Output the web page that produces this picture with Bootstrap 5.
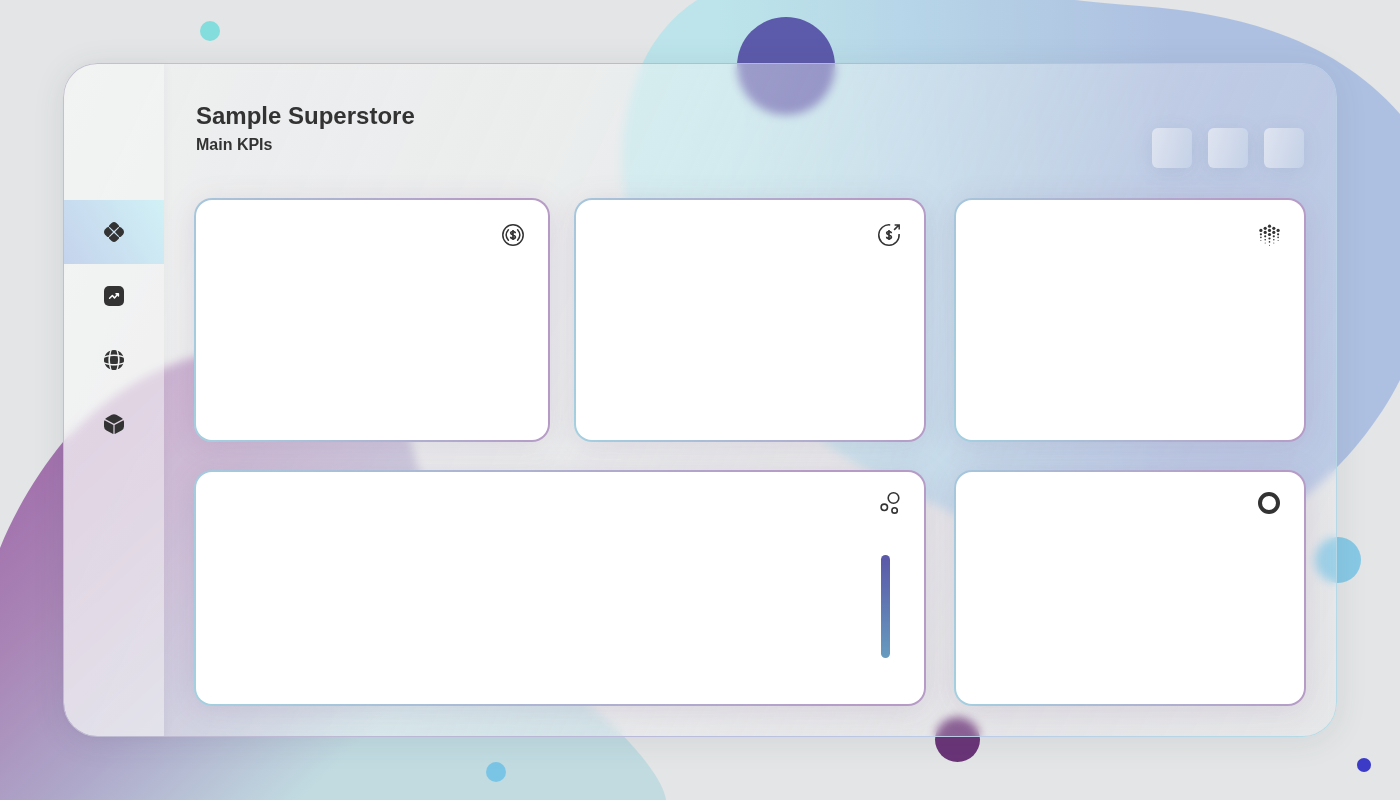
<!DOCTYPE html>
<html lang="en">
<head>
<meta charset="utf-8">
<meta name="viewport" content="width=device-width, initial-scale=1">
<title>Sample Superstore</title>
<link href="https://cdn.jsdelivr.net/npm/bootstrap@5.3.0/dist/css/bootstrap.min.css" rel="stylesheet">
<style>
  body { font-family: "Liberation Sans", Arial, sans-serif; background: #e3e5e6; color: #333; }
  .backdrop-art { position: fixed; inset: 0; width: 100%; height: 100%; z-index: -1; }
  .page-shell { padding: 63px; min-height: 100vh; }
  .glass {
    position: relative; border: 1px solid transparent; border-radius: 34px;
    background: linear-gradient(115deg, rgba(248,248,248,.5) 0%, rgba(244,246,246,.44) 40%, rgba(236,232,238,.26) 75%, rgba(240,240,244,.2) 100%);
    background-clip: padding-box;
    -webkit-backdrop-filter: blur(5px); backdrop-filter: blur(5px);
    box-shadow: 0 4px 32px rgba(60,70,90,.1);
  }
  .glass::before {
    content: ""; position: absolute; inset: -1px; border-radius: 34px; padding: 1px; pointer-events: none;
    background: linear-gradient(115deg, #c4c0d0 0%, #b9b6d6 50%, #bccbe6 75%, #b4dce6 100%);
    -webkit-mask: linear-gradient(#000 0 0) content-box, linear-gradient(#000 0 0);
    -webkit-mask-composite: xor; mask-composite: exclude;
  }
  .side-rail {
    width: 100px; padding-top: 136px; border-radius: 33px 0 0 33px;
    background: rgba(245,245,246,.5); box-shadow: 2px 0 8px rgba(60,50,80,.04);
  }
  .side-rail .nav-link { height: 64px; padding: 0; color: #333; }
  .side-rail .nav-link.active { background: linear-gradient(60deg, #c4d3ec, #d1f1f6); }
  .top-bar { padding: 36px 32px 0; min-height: 104px; }
  .top-bar h1 { font-size: 24px; line-height: 32px; }
  .top-bar h2 { font-size: 16px; line-height: 26px; }
  .tool-btn {
    width: 40px; height: 40px; padding: 0; border: 0; border-radius: 6px;
    background: linear-gradient(105deg, #dfe4f0, #c4d1e7); box-shadow: 0 4px 20px rgba(80,100,140,.12);
  }
  .board {
    display: grid; padding: 30px; gap: 28px;
    grid-template-columns: minmax(0, 732fr) minmax(0, 352fr);
    grid-template-rows: minmax(0, 244fr) minmax(0, 236fr);
  }
  .board-top { gap: 24px; }
  .wide-first { flex: 356 1 0; }
  .wide-next { flex: 352 1 0; }
  .kpi {
    border: 2px solid transparent; border-radius: 18px; padding: 23px;
    background: linear-gradient(#fff, #fff) padding-box, linear-gradient(75deg, #a3d0e0, #b69bc6 85%) border-box;
    box-shadow: 0 4px 30px rgba(110,60,120,.13);
  }
  .kpi.row-bottom { padding-top: 19px; }
  .scale-bar { width: 9px; height: 103px; margin: 40px 11px 0 0; border-radius: 5px; background: linear-gradient(#5a57a8, #679bbf); }
</style>
</head>
<body>
<svg class="backdrop-art" viewBox="0 0 1400 800" preserveAspectRatio="xMidYMid slice" aria-hidden="true">
  <defs>
    <linearGradient id="sky" gradientUnits="userSpaceOnUse" x1="720" y1="60" x2="1170" y2="40">
      <stop offset="0" stop-color="#bce4ea"/><stop offset=".28" stop-color="#b9dbe8"/>
      <stop offset=".4" stop-color="#b7d6e9"/><stop offset=".6" stop-color="#b4cfe5"/>
      <stop offset="1" stop-color="#aec0e1"/>
    </linearGradient>
    <linearGradient id="plum" gradientUnits="userSpaceOnUse" x1="15" y1="500" x2="300" y2="800">
      <stop offset="0" stop-color="#a373ae"/><stop offset=".25" stop-color="#a985b6"/>
      <stop offset=".6" stop-color="#aea8ca"/><stop offset="1" stop-color="#c1dbe1"/>
    </linearGradient>
  </defs>
  <path fill="url(#sky)" d="M697 0C650 30 620 90 622 170C628 300 720 370 822 440C860 472 925 498 955 515C1080 570 1220 560 1306 495C1345 465 1380 420 1400 380C1450 300 1450 180 1400 114C1340 45 1250 14 1140 6Q1100 3 1075 0Z"/>
  <path fill="url(#plum)" d="M0 548C15 510 40 470 63 442C95 408 130 382 164 368C250 330 380 340 411 442C436 550 520 640 590 706C630 737 664 780 666 800H0Z"/>
  <circle cx="210" cy="31" r="10" fill="#83dddd"/>
  <circle cx="786" cy="66" r="49" fill="#5c5aaa"/>
  <circle cx="1338" cy="560" r="23" fill="#88c9e5"/>
  <circle cx="957.500" cy="739.500" r="22.500" fill="#6a3477"/>
  <circle cx="496" cy="772" r="10" fill="#7ac5e6"/>
  <circle cx="1364" cy="765" r="7" fill="#3b3bc8"/>
</svg>

<div class="page-shell d-flex">
  <div class="glass d-flex flex-grow-1">
    <nav class="side-rail nav flex-column flex-shrink-0" aria-label="Sections">
      <a class="nav-link active d-flex align-items-center justify-content-center" href="#overview" aria-label="Overview" aria-current="page">
        <svg width="20" height="20" viewBox="0 0 20 20" fill="currentColor" aria-hidden="true">
          <path id="petal" d="M10 9.200 6.200 6.300Q4.100 4.500 5.500 2.900L7.600.900Q10-.900 12.400.900L14.500 2.900Q15.900 4.500 13.800 6.300Z"/>
          <use href="#petal" transform="rotate(90 10 10)"/><use href="#petal" transform="rotate(180 10 10)"/><use href="#petal" transform="rotate(270 10 10)"/>
          <path d="M5.300 5.300 14.700 14.700M14.700 5.300 5.300 14.700" stroke="#cbe2f0" stroke-width="1.100"/>
        </svg>
      </a>
      <a class="nav-link d-flex align-items-center justify-content-center" href="#trends" aria-label="Trends">
        <svg width="20" height="20" viewBox="0 0 20 20" aria-hidden="true">
          <rect width="20" height="20" rx="5" fill="currentColor"/>
          <path d="M5.600 12.300 8.400 9.500 10.500 11.900 13.500 8.600M12 7.700H14.400V10" fill="none" stroke="#fff" stroke-width="1.500" stroke-linecap="round" stroke-linejoin="round"/>
        </svg>
      </a>
      <a class="nav-link d-flex align-items-center justify-content-center" href="#regions" aria-label="Regions">
        <svg width="20" height="20" viewBox="0 0 20 20" fill="currentColor" aria-hidden="true">
          <path d="M6.300 6.300Q10 5.600 13.700 6.300Q14.400 10 13.700 13.700Q10 14.400 6.300 13.700Q5.600 10 6.300 6.300Z"/>
          <g id="side"><path d="M6.600 4.700Q6.900 2.200 7.700.300Q10-.300 12.300.300Q13.100 2.200 13.400 4.700Q10 4.100 6.600 4.700Z"/><path d="M2.500 3.300Q4 1.700 6.300.800Q5.400 2.800 5.100 5.100Q2.800 5.400.800 6.300Q1.400 4.700 2.500 3.300Z"/></g>
          <use href="#side" transform="rotate(90 10 10)"/><use href="#side" transform="rotate(180 10 10)"/><use href="#side" transform="rotate(270 10 10)"/>
        </svg>
      </a>
      <a class="nav-link d-flex align-items-center justify-content-center" href="#products" aria-label="Products">
        <svg width="20" height="20" viewBox="0 0 20 20" fill="currentColor" aria-hidden="true">
          <path d="M1.100 5Q1.800 4.100 3 3.400L7.700.800Q10-.500 12.300.800L17 3.400Q18.200 4.100 18.900 5L10 9.800Z"/>
          <path d="M.500 6.200 9.400 11.100V20Q8.600 19.800 7.700 19.300L2.500 16.600Q0 15.200 0 12.600V8.400Q0 7.100.500 6.200Z"/>
          <path d="M19.500 6.200 10.600 11.100V20Q11.400 19.800 12.300 19.300L17.500 16.600Q20 15.200 20 12.600V8.400Q20 7.100 19.500 6.200Z"/>
        </svg>
      </a>
    </nav>

    <main class="d-flex flex-column flex-grow-1">
      <header class="top-bar d-flex justify-content-between">
        <div>
          <h1 class="fw-bold m-0">Sample Superstore</h1>
          <h2 class="fw-bold m-0">Main KPIs</h2>
        </div>
        <div class="d-flex gap-3 align-self-end">
          <button class="tool-btn btn" type="button" aria-label="Tool 1"></button>
          <button class="tool-btn btn" type="button" aria-label="Tool 2"></button>
          <button class="tool-btn btn" type="button" aria-label="Tool 3"></button>
        </div>
      </header>

      <div class="board flex-grow-1">
        <div class="board-top d-flex">
          <section class="kpi wide-first d-flex flex-column align-items-end">
            <svg width="24" height="24" viewBox="0 0 24 24" fill="none" stroke="currentColor" stroke-width="1.500" stroke-linecap="round" aria-hidden="true">
              <circle cx="12" cy="12" r="10.200"/>
              <path d="M7.400 6.800Q2.900 12 7.400 17.200M16.600 6.800Q21.100 12 16.600 17.200"/>
              <path id="dollar" d="M14.300 10.300C14.300 8 9.700 7.900 9.700 10.100C9.700 12.300 14.400 11.700 14.400 13.900C14.400 16.200 9.700 16.100 9.700 13.700M12 7.100V16.900" stroke-width="1.700" stroke-linecap="butt"/>
            </svg>
          </section>
          <section class="kpi wide-next d-flex flex-column align-items-end">
            <svg width="24" height="24" viewBox="0 0 24 24" fill="none" stroke="currentColor" stroke-width="1.500" aria-hidden="true">
              <path d="M13.200 1.900A10.200 10.200 0 1 0 22.100 11M17.100 6.900 22.100 1.900M17.600 1.900H22.200V6.500"/>
              <use href="#dollar"/>
            </svg>
          </section>
        </div>
        <section class="kpi d-flex flex-column align-items-end">
          <svg width="24" height="24" viewBox="0 0 24 24" fill="currentColor" aria-hidden="true">
            <circle cx="12.500" cy="3.200" r="1.600"/><circle cx="12.500" cy="7.400" r="1.600"/><circle cx="12.500" cy="11.500" r="1.600"/><circle cx="12.500" cy="15.500" r="1.100"/><circle cx="12.500" cy="18.900" r=".8"/><circle cx="12.500" cy="22.200" r=".5"/>
            <g id="wing"><circle cx="8.200" cy="5.300" r="1.600"/><circle cx="8.200" cy="9.400" r="1.600"/><circle cx="8.200" cy="13.300" r="1.100"/><circle cx="8.200" cy="16.700" r=".8"/><circle cx="8.200" cy="20" r=".5"/>
            <circle cx="3.900" cy="7.400" r="1.600"/><circle cx="3.900" cy="11.300" r="1.100"/><circle cx="3.900" cy="14.400" r=".8"/><circle cx="3.900" cy="17.400" r=".5"/></g>
            <use href="#wing" transform="matrix(-1 0 0 1 25 0)"/>
          </svg>
        </section>
        <section class="kpi row-bottom d-flex flex-column align-items-end">
          <svg width="24" height="24" viewBox="0 0 24 24" fill="none" stroke="currentColor" stroke-width="1.600" aria-hidden="true">
            <circle cx="16.500" cy="7" r="5.300"/><circle cx="7.300" cy="16.300" r="3.200"/><circle cx="17.600" cy="19.400" r="2.700"/>
          </svg>
          <div class="scale-bar"></div>
        </section>
        <section class="kpi row-bottom d-flex flex-column align-items-end">
          <svg width="24" height="24" viewBox="0 0 24 24" fill="none" stroke="currentColor" stroke-width="4" aria-hidden="true"><circle cx="12" cy="12" r="9"/></svg>
        </section>
      </div>
    </main>
  </div>
</div>
<script src="https://cdn.jsdelivr.net/npm/bootstrap@5.3.0/dist/js/bootstrap.bundle.min.js"></script>
</body>
</html>
